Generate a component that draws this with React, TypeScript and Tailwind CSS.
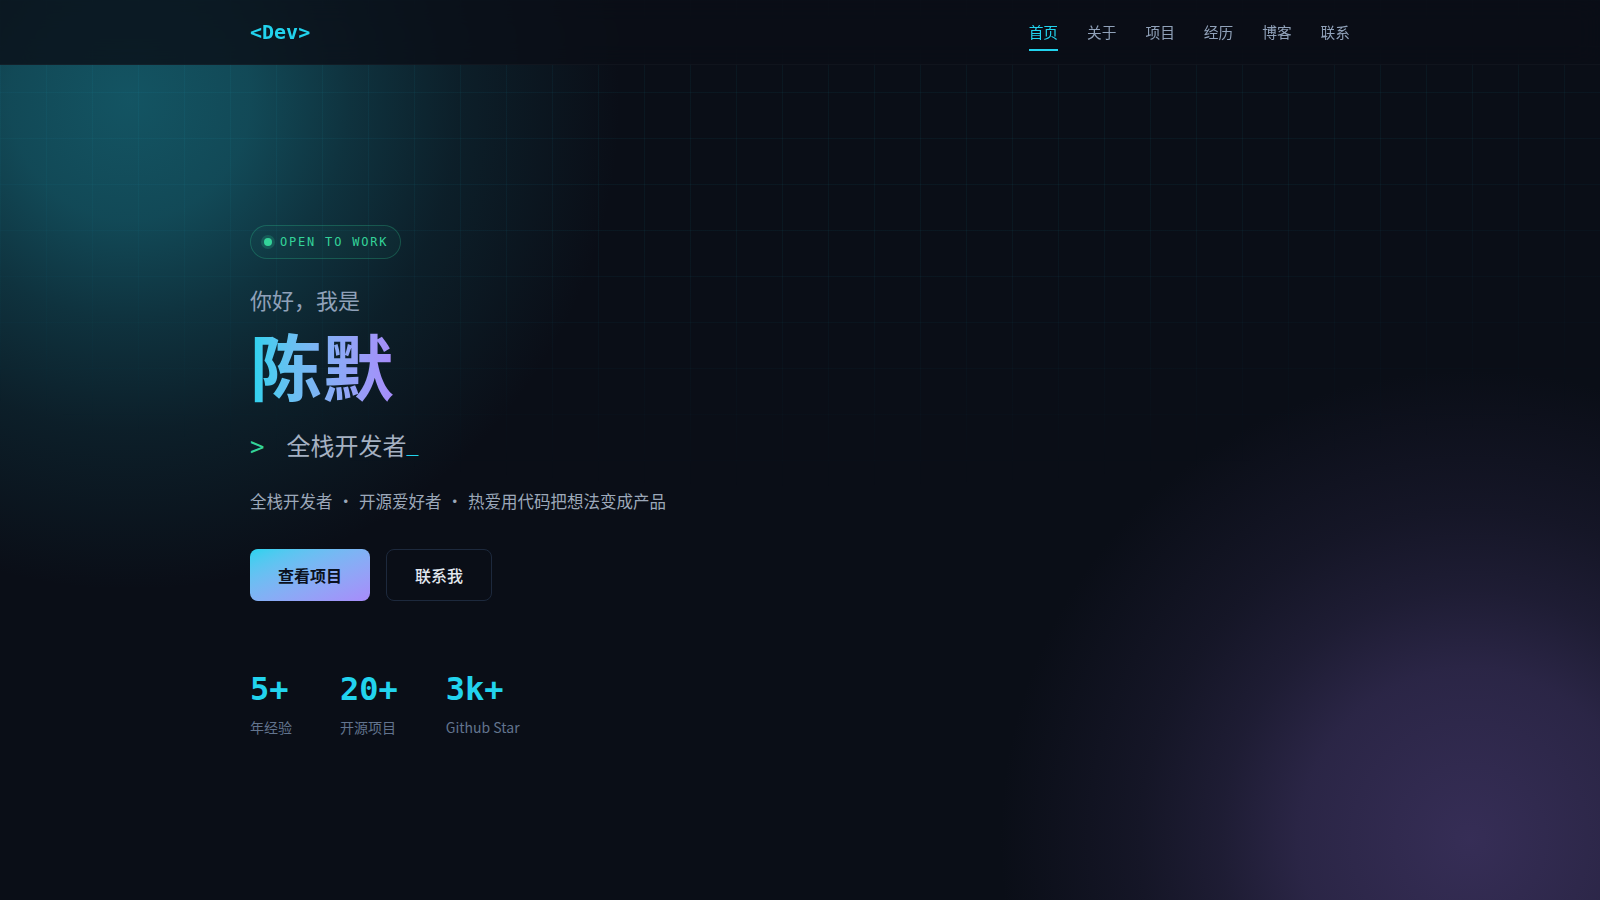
const navItems = ["首页", "关于", "项目", "经历", "博客", "联系"];

const stats = [
  { value: "5+", label: "年经验" },
  { value: "20+", label: "开源项目" },
  { value: "3k+", label: "Github Star" },
];

function Header() {
  return (
    <header className="h-[65px] border-b border-white/[0.03] bg-[#0a0e17]/80 backdrop-blur-md">
      <div className="mx-auto flex h-full max-w-[1100px] items-center justify-between">
        <a className="font-['DejaVu_Sans_Mono','Liberation_Mono',monospace] text-xl font-bold text-[#22d3ee]">
          &lt;Dev&gt;
        </a>
        <nav className="flex items-center gap-[29px]">
          {navItems.map((item, i) => (
            <a
              key={item}
              className={`relative text-[14.7px] leading-[22px] ${i === 0 ? "text-[#22d3ee]" : "text-slate-400"}`}
            >
              {item}
              {i === 0 && <span className="absolute inset-x-0 top-[28px] h-[2px] bg-[#22d3ee]" />}
            </a>
          ))}
        </nav>
      </div>
    </header>
  );
}

function Hero() {
  return (
    <main className="mx-auto w-full max-w-[1100px] pt-[160px]">
      <div className="inline-flex items-center gap-2 rounded-full border border-[#34d399]/25 bg-[#34d399]/[0.04] py-2 pl-[13px] pr-3">
        <span className="h-2 w-2 rounded-full bg-[#34d399] ring-[3px] ring-[#34d399]/20" />
        <span className="font-['DejaVu_Sans_Mono','Liberation_Mono',monospace] text-xs tracking-[0.15em] text-[#34d399]">
          OPEN TO WORK
        </span>
      </div>

      <p className="mt-6 text-[22px] leading-8 text-slate-400">你好，我是</p>

      <h1 className="mt-1.5 text-[72px] leading-[1.2] font-bold">
        <span className="inline-block bg-linear-to-r from-[#22d3ee] to-[#a78bfa] bg-clip-text text-transparent">
          陈默
        </span>
      </h1>

      <div className="mt-[22px] flex items-baseline text-2xl leading-8">
        <span className="font-['DejaVu_Sans_Mono','Liberation_Mono',monospace] text-[#34d399]">&gt;</span>
        <span className="ml-[22px] text-[#a5b1c2]">全栈开发者</span>
        <span className="-translate-y-1 font-['DejaVu_Sans_Mono','Liberation_Mono',monospace] text-xl text-[#22d3ee]">
          _
        </span>
      </div>

      <p className="mt-6 text-[16.5px] leading-7 text-[#9ca8b9]">
        全栈开发者<span className="mx-[5px]">·</span>开源爱好者<span className="mx-[5px]">·</span>热爱用代码把想法变成产品
      </p>

      <div className="mt-[34px] flex gap-4">
        <a className="rounded-lg bg-linear-to-br from-[#22d3ee] to-[#a78bfa] px-7 py-3.5 text-base leading-6 font-bold text-[#0b1120]">
          查看项目
        </a>
        <a className="rounded-lg border border-slate-800 px-7 py-[13px] text-base leading-6 font-medium text-slate-200">
          联系我
        </a>
      </div>

      <div className="mt-[68px] flex gap-12">
        {stats.map((s) => (
          <div key={s.label}>
            <div className="font-['DejaVu_Sans_Mono','Liberation_Mono',monospace] text-[32px] leading-10 font-bold text-[#22d3ee]">
              {s.value}
            </div>
            <div className="mt-2 text-sm leading-5 text-slate-500">{s.label}</div>
          </div>
        ))}
      </div>
    </main>
  );
}

export default function App() {
  return (
    <div className="grid min-h-screen bg-[#0a0e17] font-['Noto_Sans_CJK_SC','Noto_Sans',sans-serif] [background-image:radial-gradient(circle_at_1470px_840px,rgba(60,50,95,0.88)_0px,rgba(60,50,95,0.65)_170px,rgba(60,50,95,0.4)_250px,rgba(60,50,95,0.22)_330px,rgba(60,50,95,0)_470px),radial-gradient(circle_at_130px_100px,rgba(20,90,105,0.92)_0px,rgba(20,90,105,0.78)_120px,rgba(20,90,105,0.48)_220px,rgba(20,90,105,0.22)_330px,rgba(20,90,105,0)_490px)]">
      {/* grid lines, faded toward the bottom */}
      <div className="col-start-1 row-start-1 [background-image:linear-gradient(to_right,rgba(34,211,238,0.05)_1px,transparent_1px),linear-gradient(to_bottom,rgba(34,211,238,0.05)_1px,transparent_1px)] [background-size:46px_46px] [mask-image:radial-gradient(ellipse_90%_55%_at_50%_0%,#000_50%,transparent_100%)] [-webkit-mask-image:radial-gradient(ellipse_90%_55%_at_50%_0%,#000_50%,transparent_100%)]" />
      <div className="col-start-1 row-start-1 flex flex-col">
        <Header />
        <Hero />
      </div>
    </div>
  );
}
